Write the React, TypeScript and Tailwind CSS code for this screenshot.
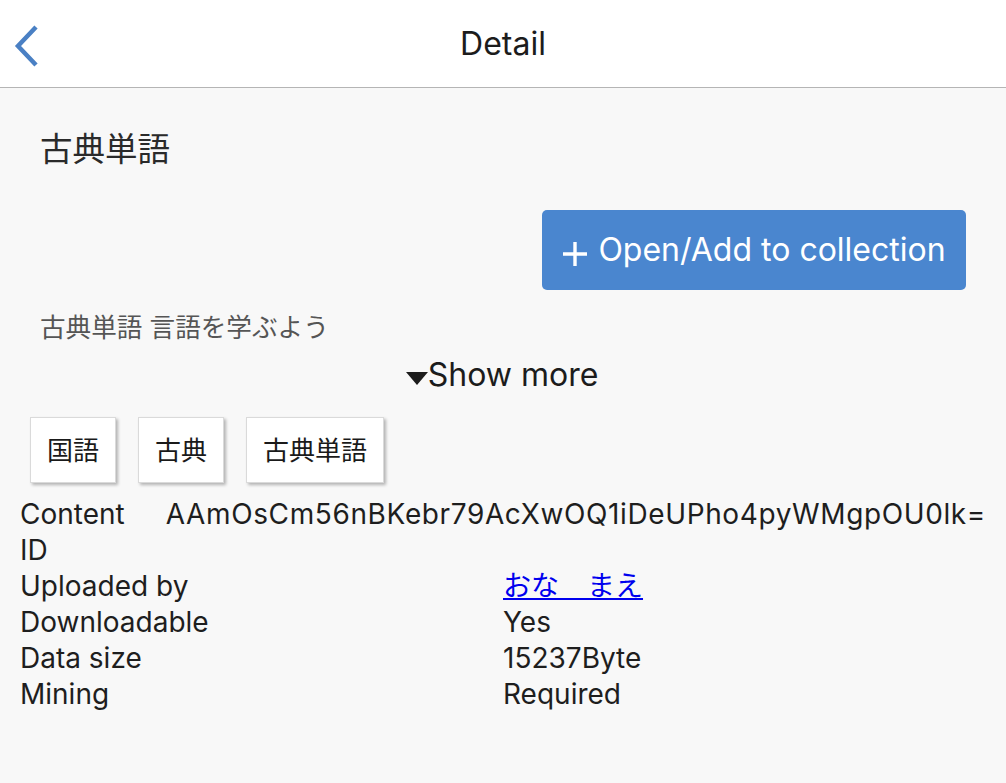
const tags = ["国語", "古典", "古典単語"]

const rows = [
  { label: "Uploaded by", value: "おな　まえ", link: true },
  { label: "Downloadable", value: "Yes" },
  { label: "Data size", value: "15237Byte" },
  { label: "Mining", value: "Required" },
]

function BackIcon() {
  return (
    <svg width="30" height="44" viewBox="0 0 30 44" fill="none">
      <path d="M24 3 L6 22 L24 41" stroke="#4a80c4" strokeWidth="4.5" strokeLinecap="butt" strokeLinejoin="miter" />
    </svg>
  )
}

export default function App() {
  return (
    <div className="min-h-[783px] bg-[#f8f8f8] font-[Inter,'Noto_Sans_CJK_JP',sans-serif] text-[#222]">
      {/* nav bar */}
      <header className="relative flex h-[88px] items-center justify-center border-b border-[#b5b5b5] bg-white">
        <button className="absolute left-[12px] top-[24px]">
          <BackIcon />
        </button>
        <h1 className="text-[32px] leading-none text-[#1c1c1c]">Detail</h1>
      </header>

      <main className="px-5">
        <div className="px-5 pt-[42px]">
          <h2 className="text-[32.5px] leading-[40px] text-[#2a2a2a]">古典単語</h2>

          <div className="mt-[40px] flex justify-end">
            <button className="flex h-[80px] w-[424px] items-center justify-center gap-[10px] rounded-[5px] bg-[#4a86cf] text-white">
              <svg width="26" height="26" viewBox="0 0 26 26" className="mt-[8px]">
                <path d="M13 1 V25 M1 13 H25" stroke="white" strokeWidth="3.4" />
              </svg>
              <span className="text-[32px] leading-none">Open/Add to collection</span>
            </button>
          </div>

          <p className="mt-[22px] text-[25.6px] leading-[32px] text-[#555]">古典単語 言語を学ぶよう</p>
        </div>

        <div className="mt-[11px] flex items-center justify-center pr-[2px]">
          <svg width="22" height="13" viewBox="0 0 22 13" className="mt-[6px]">
            <polygon points="0,0 22,0 11,13" fill="#1c1c1c" />
          </svg>
          <span className="text-[32px] leading-[40px] text-[#1c1c1c]">Show more</span>
        </div>

        <div className="ml-[10px] mt-[22px] flex gap-[22px]">
          {tags.map((t) => (
            <div
              key={t}
              className="flex h-[66px] items-center border border-[#dadada] bg-white px-[16px] text-[26px] text-[#1a1a1a] shadow-[2px_2px_3px_rgba(0,0,0,0.28)]"
            >
              {t}
            </div>
          ))}
        </div>

        <div className="mt-[13px] text-[28px] leading-[36px] text-[#1e1e1e]">
          <div className="flex">
            <div className="min-w-0 flex-1 pr-[16px]">Content ID</div>
            <div className="whitespace-nowrap tracking-[0.62px]">AAmOsCm56nBKebr79AcXwOQ1iDeUPho4pyWMgpOU0lk=</div>
          </div>
          {rows.map((r) => (
            <div key={r.label} className="grid grid-cols-2">
              <div>{r.label}</div>
              <div>
                {r.link ? (
                  <a href="#" className="text-[#0000ee] underline">
                    {r.value}
                  </a>
                ) : (
                  r.value
                )}
              </div>
            </div>
          ))}
        </div>
      </main>
    </div>
  )
}
